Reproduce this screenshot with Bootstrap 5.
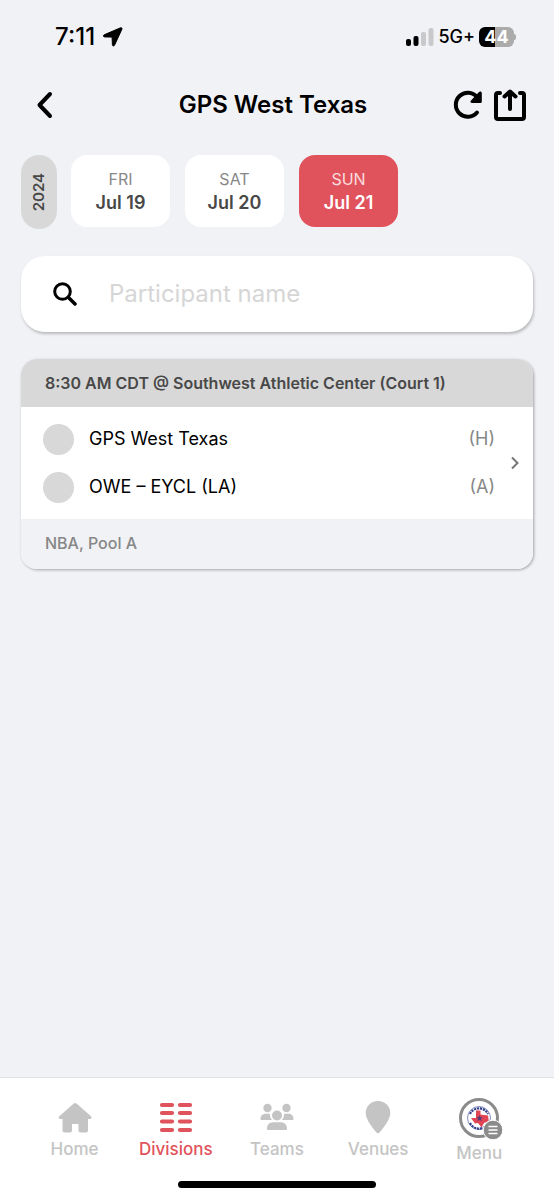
<!DOCTYPE html>
<html lang="en">
<head>
<meta charset="utf-8">
<meta name="viewport" content="width=device-width, initial-scale=1">
<title>GPS West Texas</title>
<link href="https://cdn.jsdelivr.net/npm/bootstrap@5.3.0/dist/css/bootstrap.min.css" rel="stylesheet">
<style>
  :root { --page: #f1f2f5; --accent: #e1535c; --soft: #d8d8d8; --muted: #878787; --dark: #484848; --idle: #c4c4c4; }
  body { background: var(--page); color: #000; font-family: Inter, "Liberation Sans", sans-serif; }
  svg { display: block; flex: none; }
  .status { padding: 20px 38px 0 55px; height: 54px; }
  .clock { font-size: 24px; font-weight: 500; line-height: 34px; }
  .network { font-size: 18px; font-weight: 500; line-height: 34px; }
  .battery { width: 35px; height: 20px; border-radius: 6px; font-size: 18px; font-weight: 700; line-height: 20px; background: linear-gradient(90deg, #000 45%, #ababab 45%); }
  .battery-tip { width: 2px; height: 6px; border-radius: 0 2px 2px 0; background: #ababab; }
  .topbar { display: grid; grid-template-columns: 1fr auto 1fr; align-items: center; padding: 0 28px 0 20px; height: 101px; }
  .topbar h1 { font-size: 24px; font-weight: 600; line-height: 32px; }
  .icon-btn { border: 0; padding: 0; background: none; color: #000; }
  .back { padding-left: 16px; }
  .tools { gap: 10px; }
  .content { padding: 0 21px; }
  .dates { gap: 14px; }
  .days { gap: 15px; }
  .year { width: 36px; height: 74px; border-radius: 18px; background: var(--soft); color: var(--dark); font-size: 15px; font-weight: 600; }
  .year span { writing-mode: vertical-rl; transform: rotate(180deg); }
  .day { width: 99px; height: 72px; border: 0; border-radius: 16px; background: #fff; color: var(--dark); font-size: 18px; font-weight: 600; line-height: 24px; padding: 0; }
  .day small { font-size: 16px; font-weight: 400; line-height: 24px; color: var(--muted); }
  .day.active { background: var(--accent); color: #fff; }
  .day.active small { color: #fbdcde; }
  .search { height: 76px; margin-top: 27px; padding: 0 32px; gap: 32px; border-radius: 24px; background: #fff; box-shadow: 1px 2px 3px rgba(0,0,0,.24); }
  .search input { border: 0; outline: 0; background: none; font-size: 24px; line-height: 32px; padding: 0; min-width: 0; }
  .search input::placeholder { color: #d6d6d6; opacity: 1; }
  .match { margin-top: 27px; border-radius: 16px; background: #fff; box-shadow: 1px 1px 3px rgba(0,0,0,.32); color: #000; }
  .match-head { padding: 12px 24px; background: var(--soft); color: var(--dark); font-size: 16px; font-weight: 600; line-height: 24px; }
  .match-body { padding: 16px 14px 16px 22px; }
  .team { height: 32px; font-size: 18px; line-height: 24px; gap: 15px; }
  .avatar { width: 31px; height: 31px; background: var(--soft); }
  .side { color: var(--muted); }
  .match-foot { padding: 12px 24px 14px; background: var(--page); color: var(--muted); font-size: 16px; font-weight: 500; line-height: 24px; }
  .tabs { padding: 20px 24px 12px; border-top: 1px solid #e0e2e6; background: #fff; }
  .tab { color: var(--idle); font-size: 17px; font-weight: 500; line-height: 23px; text-decoration: none; }
  .tab.active { color: var(--accent); }
  .home-bar { width: 198px; height: 7px; border-radius: 4px; background: #000; margin-top: 16px; }
</style>
</head>
<body class="d-flex flex-column min-vh-100">
<div class="status d-flex justify-content-between align-items-center">
  <div class="d-flex align-items-center gap-2">
    <span class="clock">7:11</span>
    <svg width="20" height="20" viewBox="0 0 20 20"><path d="M17.5.8 1.2 7.800c-1.200.6-1 2 .3 2.100l7.600.2.3 7.700c.1 1.400 1.600 1.600 2.200.3L18.900 2.200c.4-1-.4-1.800-1.400-1.400Z" stroke="#000"/></svg>
  </div>
  <div class="d-flex align-items-center">
    <svg class="me-1" width="28" height="18" viewBox="0 0 28 18"><rect y="11" width="5" height="7" rx="2"/><rect x="7.500" y="8" width="5" height="10" rx="2"/><g fill="#c9c9cb"><rect x="15" y="4" width="5" height="14" rx="2"/><rect x="22.500" width="5" height="18" rx="2"/></g></svg>
    <span class="network me-1">5G+</span>
    <span class="battery text-white text-center">44</span><span class="battery-tip"></span>
  </div>
</div>
<header class="topbar">
  <button class="icon-btn back text-start" aria-label="Back"><svg width="18" height="28" viewBox="0 0 18 28"><path d="M14 3 3.500 14 14 25" fill="none" stroke="#000" stroke-width="4" stroke-linecap="round" stroke-linejoin="round"/></svg></button>
  <h1 class="m-0">GPS West Texas</h1>
  <div class="tools d-flex justify-content-end align-items-center">
    <button class="icon-btn" aria-label="Refresh"><svg width="32" height="32" viewBox="0 0 32 32"><path d="M25 23.500A12 12 0 1 1 25 8" fill="none" stroke="#000" stroke-width="4" stroke-linecap="round"/><path d="M27 3c1-1 2.800-.5 2.800 1v8.500c0 1-.8 1.500-1.800 1.500h-8c-1.500 0-2-1.500-1-2.500Z"/></svg></button>
    <button class="icon-btn" aria-label="Share"><svg width="32" height="32" viewBox="0 0 32 32"><g fill="none" stroke="#000" stroke-width="4" stroke-linecap="round" stroke-linejoin="round"><path d="M6 4H4a2 2 0 0 0-2 2v22a2 2 0 0 0 2 2h24a2 2 0 0 0 2-2V6a2 2 0 0 0-2-2h-2"/><path d="M16 20V3M10.500 7.500 16 2.500l5.500 5"/></g></svg></button>
  </div>
</header>
<main class="content flex-grow-1">
  <div class="dates d-flex">
    <div class="year d-flex align-items-center justify-content-center"><span>2024</span></div>
    <div class="days d-flex">
      <button class="day"><small class="d-block">FRI</small>Jul 19</button>
      <button class="day"><small class="d-block">SAT</small>Jul 20</button>
      <button class="day active" aria-pressed="true"><small class="d-block">SUN</small>Jul 21</button>
    </div>
  </div>
  <label class="search d-flex align-items-center">
    <svg width="24" height="24" viewBox="0 0 24 24"><g fill="none" stroke="#000" stroke-width="3" stroke-linecap="round"><circle cx="9.500" cy="9.500" r="7.800"/><path d="m15.500 15.500 6.500 6.500" stroke-width="3.500"/></g></svg>
    <input class="flex-grow-1" type="text" placeholder="Participant name" aria-label="Participant name">
  </label>
  <a href="#" class="match d-block overflow-hidden text-decoration-none">
    <div class="match-head">8:30 AM CDT @ Southwest Athletic Center (Court 1)</div>
    <div class="match-body d-flex align-items-center">
      <div class="d-flex flex-column gap-3 flex-grow-1">
        <div class="team d-flex align-items-center"><span class="avatar rounded-circle"></span><span>GPS West Texas</span><span class="side ms-auto">(H)</span></div>
        <div class="team d-flex align-items-center"><span class="avatar rounded-circle"></span><span>OWE – EYCL (LA)</span><span class="side ms-auto">(A)</span></div>
      </div>
      <svg class="ms-3" width="8" height="14" viewBox="0 0 8 14"><path d="m1 1.500 5.500 5.500L1 12.500" fill="none" stroke="#777" stroke-width="2"/></svg>
    </div>
    <div class="match-foot">NBA, Pool A</div>
  </a>
</main>
<footer class="tabs">
  <nav class="row row-cols-5 g-0 text-center">
    <a href="#" class="tab col d-flex flex-column align-items-center"><svg width="40" height="40" viewBox="0 0 40 40" fill="currentColor"><path d="M18.800 5.500a2 2 0 0 1 2.700 0L36 18.200c1.200 1.100.6 2.800-1 2.800h-2v11.500a2 2 0 0 1-2 2h-5.500a2 2 0 0 1-2-2V26h-6.500v6.500a2 2 0 0 1-2 2H9.500a2 2 0 0 1-2-2V21H5.300c-1.600 0-2.200-1.700-1-2.800Z"/></svg>Home</a>
    <a href="#" class="tab active col d-flex flex-column align-items-center" aria-current="page"><svg width="40" height="40" viewBox="0 0 40 40"><path d="M6 7h10M24 7h10M6 15h10M24 15h10M6 23.500h10M24 23.500h10M6 32h10M24 32h10" stroke="currentColor" stroke-width="4.200" stroke-linecap="round"/></svg>Divisions</a>
    <a href="#" class="tab col d-flex flex-column align-items-center"><svg width="40" height="40" viewBox="0 0 40 40" fill="currentColor"><circle cx="10.500" cy="10" r="4.200"/><circle cx="29.500" cy="10" r="4.200"/><circle cx="20" cy="17.500" r="5"/><path d="M3.500 21c0-3 2-5.200 5-5.200h3.300c1 0 1.300.2 1.200 1 0 2 .7 3.800 2 5.200H4.500c-.7 0-1-.3-1-1ZM36.500 21c0-3-2-5.200-5-5.200h-3.300c-1 0-1.300.2-1.200 1 0 2-.7 3.800-2 5.200h10.500c.7 0 1-.3 1-1ZM10 30.500c0-3.500 2.500-6.300 6-6.300h8c3.500 0 6 2.800 6 6.300 0 1-.5 1.500-1.500 1.500h-17c-1 0-1.500-.5-1.500-1.500Z"/></svg>Teams</a>
    <a href="#" class="tab col d-flex flex-column align-items-center"><svg width="40" height="40" viewBox="0 0 40 40" fill="currentColor"><path d="M20 3c7 0 12.300 5.300 12.300 12 0 5.800-5.800 13.500-10.700 19.500-1 1.100-2.200 1.100-3.200 0C13.500 28.500 7.700 20.800 7.700 15 7.700 8.300 13 3 20 3Z"/></svg>Venues</a>
    <a href="#" class="tab col d-flex flex-column align-items-center"><svg width="48" height="44" viewBox="0 0 48 44"><circle cx="24" cy="20" r="18.500" fill="#fff" stroke="#8b8b8b" stroke-width="3"/><g fill="none" stroke="#34408f"><circle cx="24" cy="20" r="11.500" stroke-width=".6"/><path d="M15 16a10 10 0 0 1 18 0M15 25a10 10 0 0 0 18 0" stroke-width="2.200" stroke-dasharray="2.200 .8"/></g><path d="M21 12.500h4.500v4l7.500 1 .8 5.500-4.800 2-2.500 4.500-3.500-4.500-3 .5-4-5.500h5Z" fill="#e04455"/><path d="m24.500 17 1 2.300h2.300l-1.800 1.500.7 2.400-2.200-1.400-2.200 1.400.7-2.400-1.800-1.500h2.300Z" fill="#553878"/><circle cx="38" cy="32" r="9.800" fill="#8b8b8b" stroke="#fff"/><path d="M33.500 28.500h9M33.500 32h9M33.500 35.500h9" stroke="#fff" stroke-width="1.600"/></svg>Menu</a>
  </nav>
  <div class="home-bar mx-auto"></div>
</footer>
<script src="https://cdn.jsdelivr.net/npm/bootstrap@5.3.0/dist/js/bootstrap.bundle.min.js"></script>
</body>
</html>
